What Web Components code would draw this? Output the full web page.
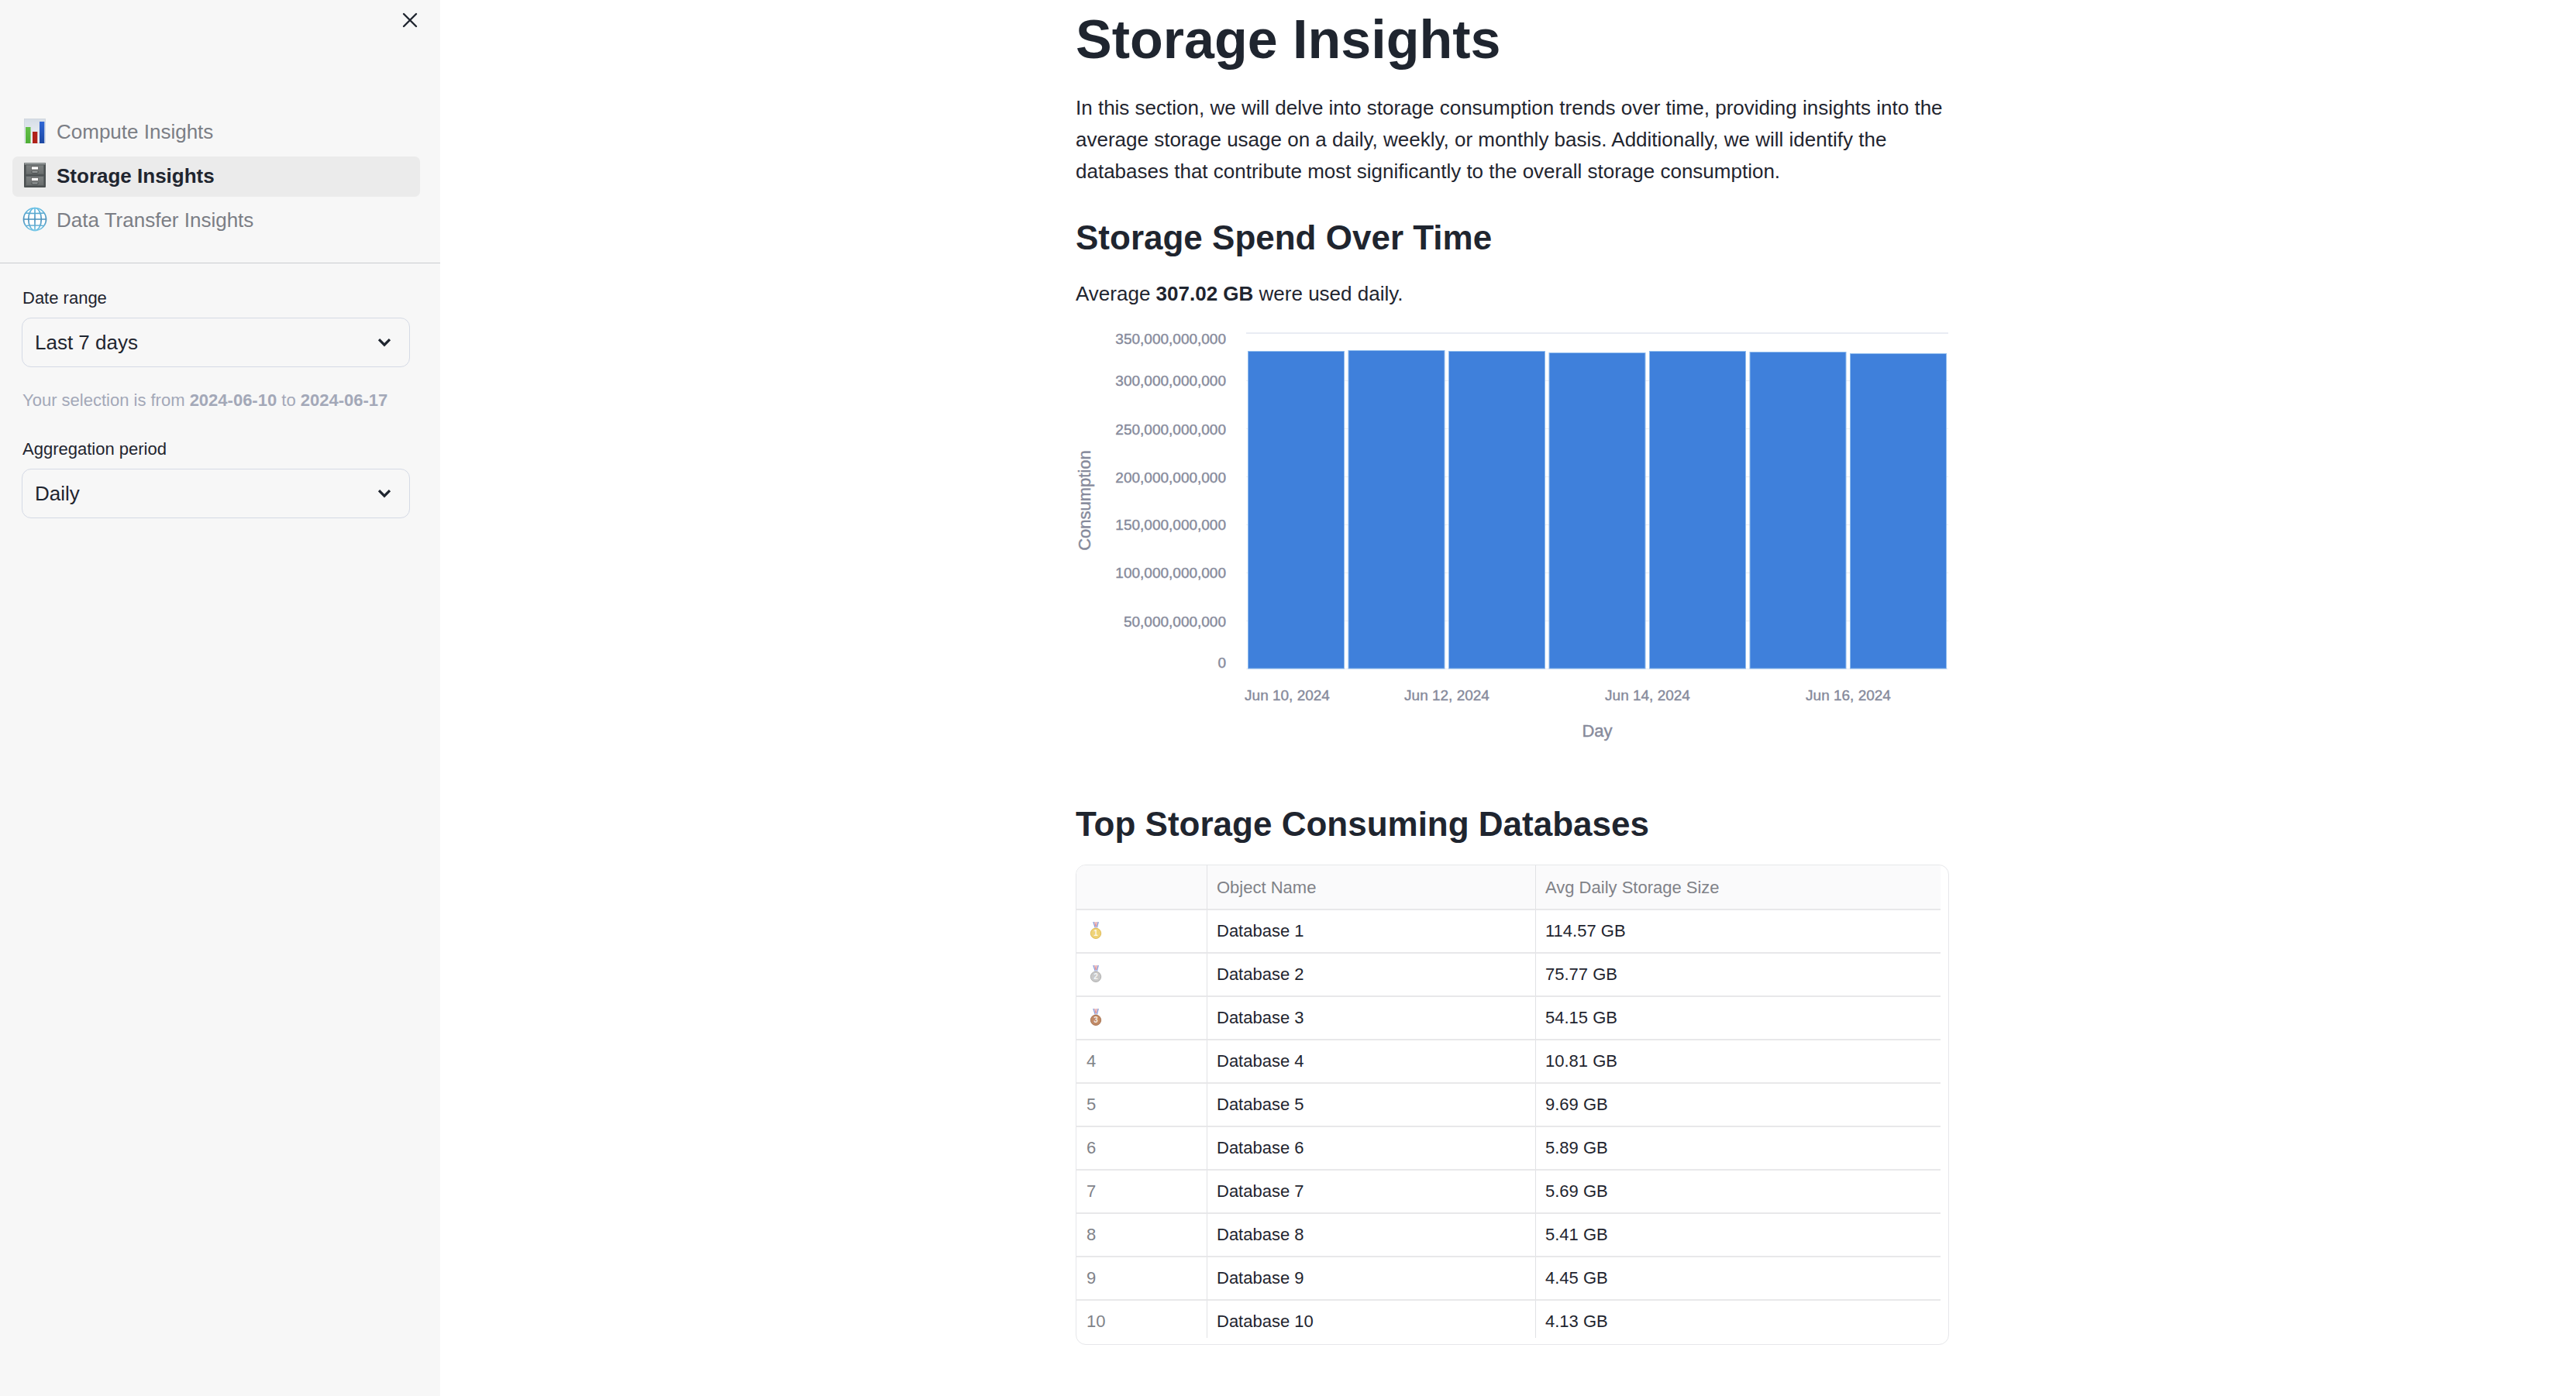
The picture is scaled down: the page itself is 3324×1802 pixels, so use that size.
<!DOCTYPE html>
<html lang="en">
<head>
<meta charset="utf-8">
<title>Storage Insights</title>
<style>
  body { margin: 0; background: #fff; color: #1f252f; font: 26px/41px "Liberation Sans", Arial, sans-serif; }
</style>
</head>
<body>
<app-shell>
  <side-bar slot="sidebar">
    <nav-item slot="nav" icon="chart">Compute Insights</nav-item>
    <nav-item slot="nav" icon="cabinet" current>Storage Insights</nav-item>
    <nav-item slot="nav" icon="globe">Data Transfer Insights</nav-item>
    <select-field label="Date range" options="Last 7 days|Last 28 days|Last 3 months|Last year"></select-field>
    <side-note>Your selection is from <b>2024-06-10</b> to <b>2024-06-17</b></side-note>
    <select-field label="Aggregation period" options="Daily|Weekly|Monthly"></select-field>
  </side-bar>
  <page-title>Storage Insights</page-title>
  <text-block>In this section, we will delve into storage consumption trends over time, providing insights into the average storage usage on a daily, weekly, or monthly basis. Additionally, we will identify the databases that contribute most significantly to the overall storage consumption.</text-block>
  <section-title>Storage Spend Over Time</section-title>
  <text-block>Average <b>307.02 GB</b> were used daily.</text-block>
  <bar-chart></bar-chart>
  <section-title>Top Storage Consuming Databases</section-title>
  <data-grid></data-grid>
</app-shell>

<script>
const define = (name, render) => customElements.define(name, class extends HTMLElement {
  constructor() {
    super();
    this.attachShadow({ mode: 'open' });
  }
  connectedCallback() {
    this.shadowRoot.innerHTML = render(this);
  }
});

const icons = {
  chart: `<svg viewBox="0 0 32 32" width="32" height="32" aria-hidden="true">
    <defs>
      <linearGradient id="bg" x1="0" y1="0" x2="0" y2="1"><stop offset="0" stop-color="#d5dde6"/><stop offset="1" stop-color="#f3f6fa"/></linearGradient>
      <linearGradient id="gr" x1="0" y1="0" x2="0" y2="1"><stop offset="0" stop-color="#64c048"/><stop offset="1" stop-color="#4fae37"/></linearGradient>
      <linearGradient id="bl" x1="0" y1="0" x2="0" y2="1"><stop offset="0" stop-color="#2f66d6"/><stop offset="1" stop-color="#1d48a2"/></linearGradient>
    </defs>
    <rect x="2.5" y="0.5" width="27" height="31" fill="url(#bg)" stroke="#ccd3db" stroke-width=".8"/>
    <rect x="4" y="11" width="6.5" height="21" fill="url(#gr)"/>
    <rect x="13" y="17" width="6.3" height="15" fill="#b0231a"/>
    <rect x="22" y="4" width="6.3" height="28" fill="url(#bl)"/>
  </svg>`,
  cabinet: `<svg viewBox="0 0 32 32" width="32" height="32" aria-hidden="true">
    <defs><linearGradient id="dr" x1="0" y1="0" x2="0" y2="1"><stop offset="0" stop-color="#7d8181"/><stop offset="1" stop-color="#6a6e6e"/></linearGradient></defs>
    <rect x="2" y="0" width="28" height="32" rx="1" fill="#4c5152"/>
    <rect x="2.6" y=".4" width="26.8" height="2" fill="#a4a9a9"/>
    <rect x="4.5" y="3" width="23" height="12" fill="url(#dr)" stroke="#5a5f60" stroke-width=".8"/>
    <rect x="4.5" y="17.5" width="23" height="12" fill="url(#dr)" stroke="#5a5f60" stroke-width=".8"/>
    <rect x="11.5" y="5" width="9" height="4" fill="#fff" stroke="#555" stroke-width=".7"/>
    <rect x="11.5" y="19.5" width="9" height="4" fill="#fff" stroke="#555" stroke-width=".7"/>
    <path d="M12 11v1.5q0 1 1.2 1h5.6q1.2 0 1.2-1V11M12 25.500v1.500q0 1 1.200 1h5.600q1.200 0 1.200-1V25.500" fill="#909494" stroke="#444849" stroke-width=".9"/>
  </svg>`,
  globe: `<svg viewBox="0 0 32 32" width="32" height="32" aria-hidden="true">
    <defs><linearGradient id="gl" gradientUnits="userSpaceOnUse" x1="0" y1="0" x2="0" y2="32"><stop offset="0" stop-color="#6fc7ea"/><stop offset=".5" stop-color="#4a8fba"/><stop offset="1" stop-color="#7ccdec"/></linearGradient></defs>
    <circle cx="16" cy="16" r="14.500" fill="#fff"/>
    <g fill="none" stroke="url(#gl)" stroke-width="1.700">
      <circle cx="16" cy="16" r="14.500"/>
      <ellipse cx="16" cy="16" rx="8.300" ry="14.500"/>
      <path d="M16 1.500v29M1.500 16h29M4 8q12 1 24 0M4 24.500q12-1.500 24 0"/>
    </g>
  </svg>`
};

define('app-shell', () => `
  <style>
    :host { display: flex; min-height: 100vh; }
    main { flex: 1; min-width: 0; box-sizing: border-box; padding: 9px 0 40px 11px; }
    .column { max-width: 1127px; margin: 0 auto; }
  </style>
  <slot name="sidebar"></slot>
  <main><div class="column"><slot></slot></div></main>`);

define('side-bar', () => `
  <style>
    :host { display: block; flex: 0 0 568px; background: #f7f7f7; }
    header { display: flex; justify-content: flex-end; padding: 10px 23px 0 0; }
    button { display: grid; place-items: center; width: 32px; height: 32px; padding: 0; border: 0; background: none; color: inherit; }
    nav { display: flex; flex-direction: column; gap: 5px; margin-top: 103px; padding: 0 26px 0 16px; }
    hr { height: 1px; margin: 28px 0 30px; border: 0; background: #caccd0; }
    .controls { padding: 0 39px 0 28px; }
  </style>
  <header>
    <button type="button" aria-label="Close sidebar">
      <svg viewBox="0 0 20 20" width="20" height="20" fill="none" stroke="currentColor" stroke-width="2.400" stroke-linecap="round"><path d="M2 2l16 16M18 2L2 18"/></svg>
    </button>
  </header>
  <nav><slot name="nav"></slot></nav>
  <hr>
  <div class="controls"><slot></slot></div>`);

define('nav-item', el => `
  <style>
    :host { display: block; }
    a { display: flex; align-items: center; gap: 12px; padding: 0 13px 2px; border-radius: 7px; color: #7b7e85; text-decoration: none; line-height: 50px; }
    :host([current]) a { background: #ebebeb; color: #1f252f; font-weight: bold; }
    svg { display: block; margin-bottom: 2px; }
  </style>
  <a href="#${el.getAttribute('icon')}"${el.hasAttribute('current') ? ' aria-current="page"' : ''}>${icons[el.getAttribute('icon')]}<span><slot></slot></span></a>`);

define('select-field', el => `
  <style>
    :host { display: block; }
    label { display: block; margin-bottom: 10px; padding-left: 1px; font-size: 22px; line-height: 30px; }
    .box { display: grid; align-items: center; }
    select, svg { grid-area: 1 / 1; }
    select { appearance: none; width: 100%; height: 64px; margin: 0; padding: 0 60px 0 16px; border: 1px solid #d5dae5; border-radius: 12px; background: #f7f7f7; color: inherit; font: inherit; }
    svg { justify-self: end; margin-right: 23px; pointer-events: none; }
  </style>
  <label for="field">${el.getAttribute('label')}</label>
  <div class="box">
    <select id="field">${el.getAttribute('options').split('|').map(o => `<option>${o}</option>`).join('')}</select>
    <svg viewBox="0 0 20 14" width="20" height="14" fill="none" stroke="currentColor" stroke-width="3.200" aria-hidden="true"><path d="M3 3.200l7 7 7-7"/></svg>
  </div>`);

define('side-note', () => `
  <style>:host { display: block; margin: 28px 0 33px; padding-left: 1px; color: #a3a8b8; font-size: 22px; line-height: 30px; }</style>
  <slot></slot>`);

define('page-title', () => `
  <style>:host { display: block; margin-bottom: 26px; } h1 { margin: 0; font-size: 70px; line-height: 84px; }</style>
  <h1><slot></slot></h1>`);

define('section-title', () => `
  <style>:host { display: block; margin: 38px 0 25px; } h2 { margin: 0; font-size: 44px; line-height: 54px; }</style>
  <h2><slot></slot></h2>`);

define('text-block', () => `
  <style>:host { display: block; } p { margin: 0; }</style>
  <p><slot></slot></p>`);

/* Plot area spans x 220-1126 and y 10-444 of the drawing. */
define('bar-chart', () => {
  const grid = [10, 72, 134, 196, 258, 320, 382, 444];
  const labelY = [17, 71, 134, 196, 257, 319, 382, 435];
  const tops = [33, 32, 33, 35, 33, 34, 36];
  const days = [['Jun 10, 2024', 273], ['Jun 12, 2024', 479], ['Jun 14, 2024', 738], ['Jun 16, 2024', 997]];
  const lines = grid.map((y, i) => `<line x1="220" x2="1126" y1="${i ? y - .5 : y}" y2="${i ? y - .5 : y}" stroke-width="${i ? 1 : 2}"/>`).join('');
  const bars = tops.map((y, i) => {
    const x = 222.5 + i * 129.5;
    return `<rect x="${x}" y="${y + .5}" width="124" height="${442.5 - y}"/>`;
  }).join('');
  const values = labelY.map((y, i) => `<text x="194" y="${y + 7}" text-anchor="end">${((7 - i) * 5e10).toLocaleString('en-US')}</text>`).join('');
  const dates = days.map(([t, x]) => `<text x="${x}" y="484" text-anchor="middle">${t}</text>`).join('');
  return `
  <style>
    :host { display: block; margin-top: 20px; }
    svg { display: block; width: 100%; height: auto; }
    .grid { stroke: #e9ecf3; }
    .bars { fill: #3f80db; stroke: #8fbcee; stroke-width: 1px; }
    text { fill: #868a9b; stroke: #868a9b; stroke-width: .4px; font-size: 19px; }
    .title { font-size: 22px; }
  </style>
  <svg viewBox="0 0 1127 579" role="img" aria-label="Consumption by day">
    <g class="grid">${lines}</g>
    <g class="bars">${bars}</g>
    ${values}${dates}
    <text class="title" x="673" y="531" text-anchor="middle">Day</text>
    <text class="title" transform="translate(19 226) rotate(-90)" text-anchor="middle">Consumption</text>
  </svg>`;
});

define('data-grid', () => {
  const sizes = ['114.57', '75.77', '54.15', '10.81', '9.69', '5.89', '5.69', '5.41', '4.45', '4.13'];
  const metals = [['#efd377', '#d9b040'], ['#c9c9c9', '#a5a5a5'], ['#c18a66', '#9c6644']];
  const medal = i => `<svg viewBox="0 0 24 24" width="24" height="24" role="img" aria-label="Rank ${i + 1}">
      <path d="M8.500 1h7l-2.500 8h-2z" fill="#f4eef2"/>
      <path d="M8.800 1l2.500 7.500M15.300 1l-2 7.500" stroke="#8aa0dc" stroke-width="1.300"/>
      <path d="M10.800 1l1.100 6M13.300 1l-1 6" stroke="#e79a9a" stroke-width="1.200"/>
      <circle cx="12" cy="15.800" r="6.700" fill="${metals[i][0]}" stroke="${metals[i][1]}" stroke-width=".8"/>
      <text x="12" y="19.400" text-anchor="middle" font-size="10" font-weight="bold" fill="#fff" fill-opacity=".85">${i + 1}</text>
    </svg>`;
  const rows = sizes.map((s, i) => `<tr><th scope="row">${i < 3 ? medal(i) : i + 1}</th><td>Database ${i + 1}</td><td>${s} GB</td></tr>`).join('');
  return `
  <style>
    :host { display: block; padding: 0 10px 8px 0; border: 1px solid #e6e7ea; border-radius: 13px; overflow: hidden; }
    table { width: 100%; table-layout: fixed; border-collapse: separate; border-spacing: 0; font-size: 22px; line-height: 26px; }
    col.rank { width: 169px; }
    col.name { width: 424px; }
    th, td { box-sizing: border-box; height: 56px; padding: 14px 11px 0 12px; border: 0 solid #e8e8ea; border-width: 0 1px 2px 0; border-right-color: #e1e2e5; text-align: left; vertical-align: top; font-weight: normal; }
    th { color: #808288; }
    tbody th { padding-left: 13px; }
    thead th { height: 58px; padding-top: 16px; background: #fafafb; }
    :is(th, td):last-child { border-right: 0; }
    tbody tr:last-child > * { height: 48px; border-bottom: 0; }
    svg { display: block; }
  </style>
  <table>
    <colgroup><col class="rank"><col class="name"><col></colgroup>
    <thead><tr><th></th><th scope="col">Object Name</th><th scope="col">Avg Daily Storage Size</th></tr></thead>
    <tbody>${rows}</tbody>
  </table>`;
});
</script>
</body>
</html>
